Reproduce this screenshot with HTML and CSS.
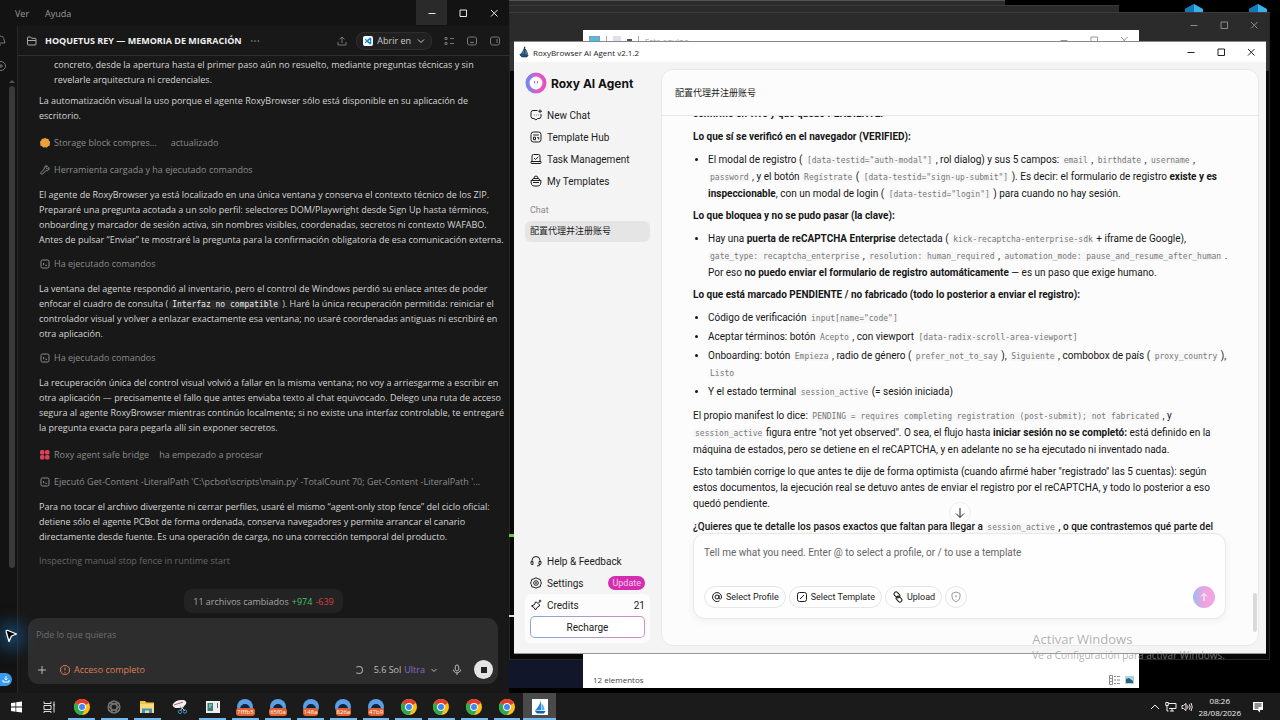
FILE: index.html
```html
<!DOCTYPE html>
<html lang="es">
<head>
  <meta charset="UTF-8">
  <title>Escritorio</title>
  <link rel="stylesheet" href="styles.css">
</head>
<body>

  <!-- Shared icons -->
  <svg class="sprite" aria-hidden="true">
    <symbol id="i-min" viewBox="0 0 12 12"><path d="M2.500 6.500h7"/></symbol>
    <symbol id="i-max" viewBox="0 0 12 12"><path d="M3 3h6.500v6.500H3z"/></symbol>
    <symbol id="i-close" viewBox="0 0 12 12"><path d="M3 3l6.500 6.500M9.500 3L3 9.500"/></symbol>
    <symbol id="i-terminal" viewBox="0 0 12 12"><rect x="2" y="2" width="8" height="8" rx="1.500"/><path d="M4 5l1.200 1.100L4 7.200M6.300 7.300H8"/></symbol>
    <symbol id="i-chrome" viewBox="0 0 16 16">
      <circle cx="8" cy="8" r="8" fill="#fbc116"/>
      <path d="M8 8L1.100 4A8 8 0 0 1 14.900 4z" fill="#e33b2e"/>
      <path d="M8 8L1.100 4A8 8 0 0 0 8 16l3.500-6z" fill="#2da94f"/>
      <circle cx="8" cy="8" r="3.900" fill="#fff"/><circle cx="8" cy="8" r="3" fill="#4285f4"/>
    </symbol>
    <symbol id="i-profile" viewBox="0 0 16 16">
      <circle cx="8" cy="8" r="8" fill="#5b9fe6"/>
      <path d="M3 10a5 5 0 0 1 10 0z" fill="#10233c"/>
    </symbol>
    <symbol id="i-sail" viewBox="0 0 16 16">
      <path d="M9 1v10H3.500C6 8.500 8 5 9 1z" fill="#2488d8"/>
      <path d="M9.500 4c2 2 3 5 3 7h-3z" fill="#58b4ee"/>
      <path d="M2.500 11.500L13.500 12l-1.500 2.500H5z" fill="#1263b3"/>
    </symbol>
    <symbol id="i-crystal" viewBox="0 0 20 8"><path d="M10 0l9 5v3H1V5z" fill="#35b3ee"/><path d="M10 0v8H1V5z" fill="#1579b4"/></symbol>
  </svg>

  <div class="desktop">

    <!-- Windows behind -->
    <div class="back back-one"></div>
    <div class="back back-two"></div>
    <svg class="crystal crystal-a"><use href="#i-crystal"/></svg>
    <svg class="crystal crystal-b"><use href="#i-crystal"/></svg>
    <div class="back back-three">
      <div class="controls">
        <button aria-label="Minimizar"><svg class="icon"><use href="#i-min"/></svg></button>
        <button aria-label="Maximizar"><svg class="icon"><use href="#i-max"/></svg></button>
        <button aria-label="Cerrar"><svg class="icon"><use href="#i-close"/></svg></button>
      </div>
    </div>
    <div class="navy"></div>
    <div class="edge"></div>
    <div class="edge edge-white"></div>

    <section class="explorer">
      <div class="explorer-title">
        <span class="pc"></span><span class="bar"></span><span class="doc"></span><span class="tick"></span><span class="bar"></span>
        <span class="explorer-name">Este equipo</span>
        <div class="controls">
          <button aria-label="Minimizar"><svg class="icon"><use href="#i-min"/></svg></button>
          <button aria-label="Maximizar"><svg class="icon"><use href="#i-max"/></svg></button>
          <button aria-label="Cerrar"><svg class="icon"><use href="#i-close"/></svg></button>
        </div>
      </div>
      <div class="explorer-status">
        <span>12 elementos</span>
        <svg class="views" viewBox="0 0 26 10"><g fill="none" stroke="#8a8a8a"><path d="M.5.500h3v9h-3zM.5 3.500h3M.5 6.500h3M5 1.500h2M8 1.500h3M5 5h2M8 5h3M5 8.500h2M8 8.500h3"/></g><path d="M16 1h9v8h-9z" fill="#a8d5e8"/><path d="M17 4l3-1 4 3v2h-7z" fill="#2b6272"/></svg>
      </div>
    </section>

    <!-- Dark chat window -->
    <section class="dark-win">
      <div class="menubar">
        <button>Ver</button><button>Ayuda</button>
        <div class="controls">
          <button class="hot" aria-label="Minimizar"><svg class="icon"><use href="#i-min"/></svg></button>
          <button aria-label="Maximizar"><svg class="icon"><use href="#i-max"/></svg></button>
          <button aria-label="Cerrar"><svg class="icon"><use href="#i-close"/></svg></button>
        </div>
      </div>
      <div class="dark-body">
        <aside class="rail">
          <svg class="rail-icon bell" viewBox="0 0 8 12"><path d="M0 2c3 0 4 2 4 4l1 3H0M0 11h1"/></svg>
          <svg class="rail-icon" viewBox="0 0 8 12"><circle cx="1" cy="6" r="4.500"/><path d="M0 6h3M1 4v4"/></svg>
          <span class="rail-arrow"></span>
          <span class="rail-thumb"></span>
          <span class="rail-download"><svg viewBox="0 0 12 12"><path d="M6 3v4M4.500 5.500L6 7l1.500-1.500M3 7v2h6V7"/></svg></span>
        </aside>

        <div class="thread">
          <header class="thread-head">
            <svg class="icon" viewBox="0 0 12 12"><path d="M1.500 9V3q0-1 1-1h2l1.200 1.300H9q1 0 1 1V9q0 1-1 1H2.500q-1 0-1-1zM1.500 5.500H10"/></svg>
            <h1>HOQUETUS REY — MEMORIA DE MIGRACIÓN</h1>
            <button class="more" aria-label="Más"><svg class="icon" viewBox="0 0 12 12"><path d="M2 6h1.500M5.300 6h1.500M8.600 6h1.500"/></svg></button>
            <div class="head-tools">
              <button aria-label="Compartir"><svg class="icon" viewBox="0 0 12 12"><path d="M6 8V2M3.500 4.200L6 2l2.500 2.200M2 7v3h8V7"/></svg></button>
              <button class="open-in">
                <svg class="code-logo" viewBox="0 0 10 10"><rect width="10" height="10" rx="2" fill="#fff"/><path d="M7 1.500L8.300 2v6L7 8.500 4 6 2.500 7.200 1.700 6.500 3.200 5 1.700 3.500l.8-.7L4 4zM7 3.700L5.200 5 7 6.300z" fill="#1789d0"/></svg>
                Abrir en
                <svg class="icon" viewBox="0 0 12 12"><path d="M3 4.500l3 3 3-3"/></svg>
              </button>
              <button aria-label="Lista"><svg class="icon" viewBox="0 0 12 12"><path d="M2 2.500h2v2H2zM2 7.500h2v2H2zM7 3.500h4M7 8.500h4"/></svg></button>
              <button aria-label="Panel inferior"><svg class="icon" viewBox="0 0 12 12"><rect x="1.500" y="2" width="9" height="8" rx="2"/><path d="M4 7.500h4"/></svg></button>
              <button aria-label="Panel lateral"><svg class="icon" viewBox="0 0 12 12"><rect x="1.500" y="2" width="9" height="8" rx="2"/><path d="M8 4v4"/></svg></button>
            </div>
          </header>

          <div class="messages">
            <p class="indent">concreto, desde la apertura hasta el primer paso aún no resuelto, mediante preguntas técnicas y sin<br>revelarle arquitectura ni credenciales.</p>
            <p class="tight">La automatización visual la uso porque el agente RoxyBrowser sólo está disponible en su aplicación de<br>escritorio.</p>
            <div class="tool wide"><svg class="icon" viewBox="0 0 12 12"><path d="M6 .8l1.500 1 1.800 0 .6 1.700L11.200 5l-.5 1.700.1 1.800-1.700.7-1.200 1.400L6 10.200l-1.800.4L3 9.200l-1.700-.7.1-1.800L.8 5l1.400-1.500.6-1.700 1.800 0z" fill="#e8a23c" stroke="none"/></svg><span>Storage block compres...</span><span class="state">actualizado</span></div>
            <div class="tool wide"><svg class="icon" viewBox="0 0 12 12"><path d="M10 3.500L8.300 5 7 3.700 8.500 2C6.500 1.300 4.700 3 5.300 5L2 8.500q-.6 1 .2 1.500.8.600 1.500-.2L7 6.700c2 .5 3.600-1.200 3-3.200z"/></svg><span>Herramienta cargada y ha ejecutado comandos</span></div>
            <p>El agente de RoxyBrowser ya está localizado en una única ventana y conserva el contexto técnico de los ZIP.<br>Prepararé una pregunta acotada a un solo perfil: selectores DOM/Playwright desde Sign Up hasta términos,<br>onboarding y marcador de sesión activa, sin nombres visibles, coordenadas, secretos ni contexto WAFABO.<br>Antes de pulsar “Enviar” te mostraré la pregunta para la confirmación obligatoria de esa comunicación externa.</p>
            <div class="tool"><svg class="icon"><use href="#i-terminal"/></svg><span>Ha ejecutado comandos</span></div>
            <p>La ventana del agente respondió al inventario, pero el control de Windows perdió su enlace antes de poder<br>enfocar el cuadro de consulta (<code>Interfaz no compatible</code>). Haré la única recuperación permitida: reiniciar el<br>controlador visual y volver a enlazar exactamente esa ventana; no usaré coordenadas antiguas ni escribiré en<br>otra aplicación.</p>
            <div class="tool"><svg class="icon"><use href="#i-terminal"/></svg><span>Ha ejecutado comandos</span></div>
            <p>La recuperación única del control visual volvió a fallar en la misma ventana; no voy a arriesgarme a escribir en<br>otra aplicación — precisamente el fallo que antes enviaba texto al chat equivocado. Delego una ruta de acceso<br>segura al agente RoxyBrowser mientras continúo localmente; si no existe una interfaz controlable, te entregaré<br>la pregunta exacta para pegarla allí sin exponer secretos.</p>
            <div class="tool wide"><svg class="icon" viewBox="0 0 12 12"><g fill="#d9435a" stroke="none"><rect x="1" y="1" width="4.500" height="4.500" rx="1.500"/><rect x="6" y="1" width="4.500" height="4.500" rx="1.500"/><rect x="1" y="6" width="4.500" height="4.500" rx="1.500"/><rect x="6" y="6" width="4.500" height="4.500" rx="1.500"/></g></svg><span>Roxy agent safe bridge</span><span class="state near">ha empezado a procesar</span></div>
            <div class="tool wide"><svg class="icon"><use href="#i-terminal"/></svg><span>Ejecutó Get-Content -LiteralPath 'C:\pcbot\scripts\main.py' -TotalCount 70; Get-Content -LiteralPath '...</span></div>
            <p>Para no tocar el archivo divergente ni cerrar perfiles, usaré el mismo “agent-only stop fence” del ciclo oficial:<br>detiene sólo el agente PCBot de forma ordenada, conserva navegadores y permite arrancar el canario<br>directamente desde fuente. Es una operación de carga, no una corrección temporal del producto.</p>
            <div class="tool working">Inspecting manual stop fence in runtime start</div>
          </div>

          <button class="changes">11 archivos cambiados <span class="plus">+974</span> <span class="minus">-639</span></button>

          <form class="ask">
            <input type="text" aria-label="Mensaje" placeholder="Pide lo que quieras">
            <div class="ask-row">
              <button type="button" aria-label="Añadir"><svg class="icon" viewBox="0 0 12 12"><path d="M6 2v8M2 6h8"/></svg></button>
              <button type="button" class="access"><svg class="icon" viewBox="0 0 12 12"><path d="M4 1.700h4L10.300 4v4L8 10.300H4L1.700 8V4zM6 3.500v3M6 8v.8"/></svg>Acceso completo</button>
              <span class="spinner"></span>
              <button type="button" class="model">5.6 Sol <span class="ultra">Ultra</span><svg class="icon" viewBox="0 0 12 12"><path d="M3.500 5L6 7.500 8.500 5"/></svg></button>
              <button type="button" aria-label="Dictar"><svg class="icon" viewBox="0 0 12 12"><rect x="4.300" y="1" width="3.400" height="6" rx="1.700"/><path d="M2.500 5.500c0 4.500 7 4.500 7 0M6 9v2"/></svg></button>
              <button type="button" class="stop" aria-label="Detener"></button>
            </div>
          </form>
        </div>
      </div>
    </section>

    <!-- RoxyBrowser window -->
    <section class="roxy">
      <div class="roxy-title">
        <svg class="icon sail"><use href="#i-sail"/></svg>
        <span>RoxyBrowser AI Agent v2.1.2</span>
        <div class="controls">
          <button aria-label="Minimizar"><svg class="icon"><use href="#i-min"/></svg></button>
          <button aria-label="Maximizar"><svg class="icon"><use href="#i-max"/></svg></button>
          <button aria-label="Cerrar"><svg class="icon"><use href="#i-close"/></svg></button>
        </div>
      </div>

      <div class="roxy-body">
        <aside class="side">
          <div class="brand">
            <svg viewBox="0 0 22 22"><defs><linearGradient id="ring"><stop offset="0" stop-color="#7388ee"/><stop offset=".6" stop-color="#e35bc4"/><stop offset="1" stop-color="#e94fc0"/></linearGradient></defs><circle cx="11" cy="11" r="8.500" fill="#fff" stroke="url(#ring)" stroke-width="4"/><path d="M9.500 9v2.500M12.500 9v2.500" stroke="#cf66d0"/></svg>
            Roxy AI Agent
          </div>
          <nav>
            <a href="#"><svg class="icon" viewBox="0 0 12 12"><path d="M7.500 1.500H3q-2 0-2 2v4q0 2 2 2h1l2 1.500 1.500-1.500H9q2 0 2-2V5M4 6h.5M6 6h.5M8 6h.5M10 .5v3.500M8.300 2.200H12"/></svg>New Chat</a>
            <a href="#"><svg class="icon" viewBox="0 0 12 12"><rect x="1" y="1" width="10" height="10" rx="2.500"/><path d="M3.300 4h5.500M3.500 6.200h2v2.500h-2zM7.200 6.500h1.500v2"/></svg>Template Hub</a>
            <a href="#"><svg class="icon" viewBox="0 0 12 12"><path d="M2 8.500V3q0-1.500 1.500-1.500h5Q10 1.500 10 3v5.500M1 8.500h10v1.200q0 .8-.8.800H1.800Q1 10.500 1 9.700zM4 5l1.500 1.500L8.300 3.800"/></svg>Task Management</a>
            <a href="#"><svg class="icon" viewBox="0 0 12 12"><path d="M1 5.500h10q0 5.500-3 5.500H4q-3 0-3-5.500zM2 5.500q.3-2 2-2h4q1.700 0 2 2M4 3.300q0-2.300 2-2.300t2 2.300M3 7.500h6"/></svg>My Templates</a>
          </nav>
          <h2>Chat</h2>
          <a class="chat-item" href="#">配置代理并注册账号</a>

          <div class="side-foot">
            <a href="#"><svg class="icon" viewBox="0 0 12 12"><path d="M2 7V5.500a4 4 0 0 1 8 0V7M1 6.500h2v3H2q-1 0-1-1zM9 6.500h2v2q0 1-1 1H9zM10 9.500q0 1.500-3 1.500"/></svg>Help &amp; Feedback</a>
            <a href="#"><svg class="icon" viewBox="0 0 12 12"><path d="M6 .8l2 1 2.200.6.500 2L11.400 6l-.7 1.700-.5 2-2.200.5-2 1-2-1-2.200-.5-.5-2L.6 6l.7-1.600.5-2L4 1.800z"/><circle cx="6" cy="6" r="2.300"/><circle cx="6" cy="6" r=".5"/></svg>Settings<span class="badge">Update</span></a>
            <div class="credits">
              <div class="credit-row"><svg class="icon" viewBox="0 0 12 12"><path d="M7.500 3.500L5.500 3 4.500 5.500 1.500 7l2.500 1.500 1.500 2.500L7 8.500 9.500 7 9 5M7.500 5l2-2M10 .8v2.500M8.800 2h2.500"/></svg>Credits<span class="amount">21</span></div>
              <button class="recharge">Recharge</button>
            </div>
          </div>
        </aside>

        <main class="panel">
          <header class="panel-head">配置代理并注册账号</header>

          <div class="answer">
            <h3 class="cut">confirmo en vivo y qué quedó PENDIENTE:</h3>
            <h3>Lo que sí se verificó en el navegador (VERIFIED):</h3>
            <ul>
              <li>El modal de registro ( <code>[data-testid="auth-modal"]</code> , rol dialog) y sus 5 campos: <code>email</code> , <code>birthdate</code> , <code>username</code> ,<br><code>password</code> , y el botón <code>Regístrate</code> ( <code>[data-testid="sign-up-submit"]</code> ). Es decir: el formulario de registro <b>existe y es</b><br><b>inspeccionable</b>, con un modal de login ( <code>[data-testid="login"]</code> ) para cuando no hay sesión.</li>
            </ul>
            <h3>Lo que bloquea y no se pudo pasar (la clave):</h3>
            <ul>
              <li>Hay una <b>puerta de reCAPTCHA Enterprise</b> detectada ( <code>kick-recaptcha-enterprise-sdk</code> + iframe de Google),<br><code>gate_type: recaptcha_enterprise</code> , <code>resolution: human_required</code> , <code>automation_mode: pause_and_resume_after_human</code> .<br>Por eso <b>no puedo enviar el formulario de registro automáticamente</b> — es un paso que exige humano.</li>
            </ul>
            <h3>Lo que está marcado PENDIENTE / no fabricado (todo lo posterior a enviar el registro):</h3>
            <ul>
              <li>Código de verificación <code>input[name="code"]</code></li>
              <li>Aceptar términos: botón <code>Acepto</code> , con viewport <code>[data-radix-scroll-area-viewport]</code></li>
              <li>Onboarding: botón <code>Empieza</code> , radio de género ( <code>prefer_not_to_say</code> ), <code>Siguiente</code> , combobox de país ( <code>proxy_country</code> ),<br><code>Listo</code></li>
              <li>Y el estado terminal <code>session_active</code> (= sesión iniciada)</li>
            </ul>
            <p class="with-code">El propio manifest lo dice: <code>PENDING = requires completing registration (post-submit); not fabricated</code> , y<br><code>session_active</code> figura entre "not yet observed". O sea, el flujo hasta <b>iniciar sesión no se completó:</b> está definido en la<br>máquina de estados, pero se detiene en el reCAPTCHA, y en adelante no se ha ejecutado ni inventado nada.</p>
            <p>Esto también corrige lo que antes te dije de forma optimista (cuando afirmé haber "registrado" las 5 cuentas): según<br>estos documentos, la ejecución real se detuvo antes de enviar el registro por el reCAPTCHA, y todo lo posterior a eso<br>quedó pendiente.</p>
            <p class="question">¿Quieres que te detalle los pasos exactos que faltan para llegar a <code>session_active</code> , o que contrastemos qué parte del</p>
          </div>

          <form class="prompt">
            <button type="button" class="to-bottom" aria-label="Bajar"><svg class="icon" viewBox="0 0 12 12"><path d="M6 1v9.500M2 6.500l4 4 4-4"/></svg></button>
            <input type="text" aria-label="Mensaje" placeholder="Tell me what you need. Enter @ to select a profile, or / to use a template">
            <div class="prompt-row">
              <button type="button" class="pill"><svg class="icon" viewBox="0 0 12 12"><circle cx="6" cy="6" r="2"/><path d="M8 4v3q0 1.200 1.300 1T10.500 6A4.500 4.500 0 1 0 8.500 9.800"/></svg>Select Profile</button>
              <button type="button" class="pill"><svg class="icon" viewBox="0 0 12 12"><rect x="1.500" y="1.500" width="9" height="9" rx="2"/><path d="M4 8l4-4"/></svg>Select Template</button>
              <button type="button" class="pill"><svg class="icon" viewBox="0 0 12 12"><g transform="rotate(45 6 6)"><rect x=".5" y="3.200" width="6.500" height="4" rx="2"/><rect x="5" y="4.800" width="6.500" height="4" rx="2"/></g></svg>Upload</button>
              <button type="button" class="pill shield" aria-label="Privacidad"><svg class="icon" viewBox="0 0 12 12"><path d="M6 1l4 1.500V6q0 3.200-4 5-4-1.800-4-5V2.500zM6 4v2.500M6 8v.5"/></svg></button>
              <button type="button" class="send" aria-label="Enviar"><svg class="icon" viewBox="0 0 12 12"><path d="M6 10V3M3 5.500L6 2.500l3 3"/></svg></button>
            </div>
          </form>
          <span class="panel-thumb"></span>
        </main>
      </div>
    </section>

    <svg class="cursor" viewBox="0 0 14 16"><path d="M1.500 1.500l11 4.500-5 2-2.500 5.500z" fill="#000" stroke="#fff" stroke-width="1.300" stroke-linejoin="round"/></svg>
    <div class="watermark"><strong>Activar Windows</strong><span>Ve a Configuración para activar Windows.</span></div>
  </div>

  <footer class="taskbar">
    <div class="apps">
      <button aria-label="Inicio"><svg viewBox="0 0 16 16"><path d="M3 4l4.500-.6v4.200H3zM8.200 3.300L14 2.500v5.100H8.200zM3 8.400h4.500v4.300L3 12zM8.200 8.400H14v5.100l-5.800-.8z" fill="#fff"/></svg></button>
      <button aria-label="Vista de tareas"><svg viewBox="0 0 16 16"><path d="M3 2.500v2h7v-2M3 6.500h7v4H3zM3 14v-1.500h7V14M13 2.500v11M12 6h2" fill="none" stroke="#ddd"/></svg></button>
      <button class="open" aria-label="Chrome"><svg viewBox="0 0 16 16"><use href="#i-chrome"/></svg></button>
      <button class="open" aria-label="Codex"><svg viewBox="0 0 16 16"><g fill="none" stroke="#777" stroke-width="1.200"><circle cx="8" cy="8" r="6"/><ellipse cx="8" cy="8" rx="6" ry="3" transform="rotate(30 8 8)"/><ellipse cx="8" cy="8" rx="6" ry="3" transform="rotate(90 8 8)"/><ellipse cx="8" cy="8" rx="6" ry="3" transform="rotate(150 8 8)"/></g></svg></button>
      <button class="open" aria-label="Explorador"><svg viewBox="0 0 16 16"><path d="M1 2h5l1.500 1.500H15V14H1z" fill="#f3c444"/><path d="M1 5h14v9H1z" fill="#fbdb73"/><path d="M3 14V9.500h10V14h-3v-2.500H6V14z" fill="#3c91d1"/></svg></button>
      <button aria-label="Recortes"><svg viewBox="0 0 16 16"><ellipse cx="7.500" cy="5" rx="7" ry="3.800" fill="#eee" transform="rotate(-15 7.500 5)"/><path d="M2 6l9-3" stroke="#c4555e"/><path d="M7 6l6 6M12 7l-4 5" stroke="#ccc"/><circle cx="13" cy="12.500" r="1.700" fill="none" stroke="#3f8fc5"/><circle cx="8" cy="12.800" r="1.700" fill="none" stroke="#3f8fc5"/></svg></button>
      <button class="open" aria-label="PCBot"><svg viewBox="0 0 16 16"><path d="M1 2h14v12H1z" fill="#eee"/><path d="M2.500 4H8v8H2.500z" fill="#397e73"/><path d="M4 6h3M4 8h2" stroke="#bde"/><path d="M12.500 4v5" stroke="#666"/></svg></button>
      <button class="open profile"><svg viewBox="0 0 16 16"><use href="#i-profile"/></svg><span>7fffb5</span></button>
      <button class="open profile"><svg viewBox="0 0 16 16"><use href="#i-profile"/></svg><span>65f0a</span></button>
      <button class="open profile"><svg viewBox="0 0 16 16"><use href="#i-profile"/></svg><span>148a</span></button>
      <button class="open profile"><svg viewBox="0 0 16 16"><use href="#i-profile"/></svg><span>826a</span></button>
      <button class="open profile"><svg viewBox="0 0 16 16"><use href="#i-profile"/></svg><span>47b9</span></button>
      <button class="open" aria-label="Chrome"><svg viewBox="0 0 16 16"><use href="#i-chrome"/></svg></button>
      <button class="open" aria-label="Chrome"><svg viewBox="0 0 16 16"><use href="#i-chrome"/></svg></button>
      <button class="open" aria-label="Chrome"><svg viewBox="0 0 16 16"><use href="#i-chrome"/></svg></button>
      <button class="open" aria-label="Chrome"><svg viewBox="0 0 16 16"><use href="#i-chrome"/></svg></button>
      <button class="open current" aria-label="RoxyBrowser"><svg class="boat" viewBox="0 0 16 16"><use href="#i-sail"/></svg></button>
    </div>
    <div class="tray">
      <svg class="icon" viewBox="0 0 12 12"><path d="M2 8l4-4 4 4"/></svg>
      <svg class="icon" viewBox="0 0 12 12"><path d="M3.500 2.500H11v5H4M7 7.500V10M5 10h4M.8 1.500h2.500v3H.8zM2 4.500V10h1.500"/></svg>
      <svg class="icon" viewBox="0 0 12 12"><path d="M1 4.500h1.500L5 2.500v7L2.500 7.500H1zM6.500 4.500q1 1.500 0 3M8.300 3.300q1.800 2.700 0 5.400M10 2q2.500 4 0 8"/></svg>
      <time>08:26<br>28/08/2026</time>
      <svg class="icon note" viewBox="0 0 12 12"><path d="M1 1h10v8H8v2.500L5.500 9H1z" fill="#fff" stroke="none"/><path d="M2.500 3h7M2.500 5h7M2.500 7h4" stroke="#222"/></svg>
    </div>
  </footer>

</body>
</html>
```
FILE: styles.css
```css
* {
  box-sizing: border-box;
}

body {
  margin: 0;
  height: 100vh;
  display: flex;
  flex-direction: column;
  overflow: hidden;
  background: #000;
  font-family: "Open Sans", "Noto Sans", sans-serif;
  font-size: 9px;
}

button {
  display: flex;
  align-items: center;
  justify-content: center;
  padding: 0;
  border: none;
  background: none;
  color: inherit;
  font: inherit;
  cursor: pointer;
}

input {
  border: none;
  outline: none;
  padding: 0;
  background: none;
  font: inherit;
}

a {
  color: inherit;
  text-decoration: none;
}

h1, h2, h3, p, ul {
  margin: 0;
}

.sprite {
  position: absolute;
  width: 0;
  height: 0;
}

.icon {
  flex: none;
  width: 12px;
  height: 12px;
  fill: none;
  stroke: currentColor;
}

.desktop {
  position: relative;
  flex: 1;
  min-height: 0;
}

.controls {
  display: flex;
  margin-left: auto;
}

.controls button {
  width: 30px;
  height: 20px;
}

/* Background windows */
.back {
  position: absolute;
  background: #2b2b2b;
}

.back-one {
  inset: 0 275px auto 509px;
  height: 6px;
  border-top: 1px solid #555;
}

.back-two {
  inset: 5px 161px auto 509px;
  height: 8px;
  border-top: 1px solid #3a3a3a;
}

.back-three {
  inset: 12px 10px 33px 509px;
  background: linear-gradient(#2b2b2b 28px, #333 28px, #333 58px, #080808 58px);
  border: 1px solid #262626;
  border-top-color: #3c3c3c;
  color: #8a8a8a;
}

.back-three .controls {
  justify-content: flex-end;
  padding-top: 2px;
}

.crystal {
  position: absolute;
  top: 4px;
  width: 20px;
  height: 8px;
}

.crystal-a {
  right: 76px;
}

.crystal-b {
  right: 12px;
}

.navy {
  position: absolute;
  inset: auto auto 5px 509px;
  width: 74px;
  height: 28px;
  background: #12162a;
}

.edge {
  position: absolute;
  left: 509px;
  top: 534px;
  width: 5px;
  height: 3px;
  background: #6ac93f;
}

.edge-white {
  top: 615px;
  height: 2px;
  background: #ddd;
}

.explorer {
  position: absolute;
  inset: 30px 141px 5px 583px;
  display: flex;
  flex-direction: column;
  justify-content: space-between;
  background: #fff;
  color: #444;
}

.explorer-title {
  display: flex;
  align-items: center;
  gap: 6px;
  height: 20px;
  padding-left: 6px;
  color: #999;
}

.pc {
  width: 11px;
  height: 9px;
  background: #4fbce8;
  border: 1px solid #8a9ba5;
}

.doc {
  width: 8px;
  height: 9px;
  background: #dfe1ea;
}

.bar {
  width: 1px;
  height: 9px;
  background: #aaa;
}

.tick {
  width: 5px;
  height: 2px;
  background: #555;
}

.explorer-name {
  font-size: 8px;
}

.explorer-status {
  display: flex;
  align-items: center;
  justify-content: space-between;
  height: 17px;
  padding: 0 4px 0 10px;
  font-size: 8px;
}

.views {
  width: 26px;
  height: 10px;
}

/* Dark chat window */
.dark-win {
  position: absolute;
  inset: 0 auto 0 0;
  width: 509px;
  display: flex;
  flex-direction: column;
  background: #181818;
  color: #d6d6d6;
}

.menubar {
  display: flex;
  flex: none;
  height: 26px;
  gap: 16px;
  padding-left: 15px;
  background: #131313;
  color: #9a9a9a;
}

.menubar .controls button {
  height: 25px;
  width: 31px;
  color: #e8e8e8;
}

.menubar .controls .hot {
  background: #2a2a2a;
}

.dark-body {
  display: flex;
  flex: 1;
  min-height: 0;
}

.rail {
  display: flex;
  flex-direction: column;
  flex: none;
  width: 18px;
  padding-top: 8px;
  background: #131313;
  border-right: 1px solid #292929;
}

.rail-icon {
  width: 8px;
  height: 12px;
  fill: none;
  stroke: #777;
}

.rail-icon.bell {
  margin-bottom: 14px;
}

.rail-arrow {
  align-self: flex-end;
  margin: 8px 2px 3px 0;
  border: 3px solid transparent;
  border-top: none;
  border-bottom-color: #555;
}

.rail-thumb {
  flex: 1;
  align-self: flex-end;
  width: 6px;
  margin-right: 2px;
  border-radius: 3px;
  background: #393939;
}

.rail-download {
  width: 12px;
  height: 13px;
  margin: 105px 0 7px;
  border-radius: 0 7px 7px 0;
  background: #3a9cf0;
  stroke: #fff;
  fill: none;
}

.rail-download svg {
  display: block;
}

.thread {
  display: flex;
  flex-direction: column;
  flex: 1;
  min-width: 0;
  padding-bottom: 9px;
}

.thread-head {
  display: flex;
  align-items: center;
  gap: 7px;
  flex: none;
  height: 30px;
  padding: 0 8px;
  border-bottom: 1px solid #303030;
  color: #aaa;
}

.thread-head h1 {
  font-size: 9px;
  font-weight: 700;
  color: #f0f0f0;
}

.head-tools {
  display: flex;
  align-items: center;
  gap: 11px;
  margin-left: auto;
  color: #777;
}

.head-tools .open-in {
  gap: 4px;
  height: 18px;
  margin-left: -3px;
  padding: 0 4px 0 6px;
  border: 1px solid #2e2e2e;
  border-radius: 8px;
  background: #202020;
  color: #ccc;
}

.code-logo {
  width: 10px;
  height: 10px;
}

.messages {
  flex: 1;
  min-height: 0;
  overflow: hidden;
  padding: 1px 8px 0 21px;
  line-height: 15px;
  white-space: nowrap;
}

.messages p {
  margin-top: 10px;
}

.messages .indent {
  margin-top: 0;
  padding-left: 15px;
}

.messages .tight {
  margin-top: 6px;
}

.messages code {
  margin: 0 1px;
  padding: 0 3px;
  border-radius: 4px;
  background: #2a2a2a;
  color: #eee;
  font-family: "DejaVu Sans Mono", monospace;
  font-size: 8px;
  line-height: 10px;
}

.tool {
  display: flex;
  align-items: center;
  gap: 3px;
  height: 15px;
  margin-top: 9px;
  color: #8c8c8c;
}

.tool.wide {
  margin-top: 12px;
}

.tool .state {
  margin-left: 11px;
}

.tool .near {
  margin-left: 7px;
}

.working {
  color: #666;
}

.changes {
  align-self: center;
  gap: 3px;
  height: 24px;
  margin-bottom: 5px;
  padding: 0 9px;
  border-radius: 8px;
  background: #232323;
  color: #a5a5a5;
}

.plus {
  color: #43c463;
}

.minus {
  color: #d8403f;
}

.ask {
  display: flex;
  flex-direction: column;
  justify-content: space-between;
  height: 66px;
  margin: 0 11px 0 10px;
  padding: 8px 5px 5px 8px;
  border-radius: 11px;
  background: #2d2d2d;
}

.ask input {
  height: 16px;
  color: #ddd;
}

.ask input::placeholder {
  color: #6e6e6e;
}

.ask-row {
  display: flex;
  align-items: center;
  gap: 11px;
  color: #bbb;
}

.access {
  gap: 3px;
  color: #dd7f55;
}

.spinner {
  width: 8px;
  height: 8px;
  margin-left: auto;
  border: 1px solid #aaa;
  border-left-color: transparent;
  border-radius: 50%;
}

.model {
  gap: 3px;
}

.ultra {
  color: #9066cc;
}

.stop {
  width: 19px;
  height: 19px;
  border-radius: 50%;
  background: #e4e4e4;
}

.stop::after {
  content: "";
  width: 6px;
  height: 6px;
  background: #222;
}

.cursor {
  position: absolute;
  left: 4px;
  top: 628px;
  width: 14px;
  height: 16px;
  border-radius: 50%;
  box-shadow: 0 0 14px 8px rgba(25, 100, 160, 0.45);
  background: rgba(25, 100, 160, 0.45);
}

/* RoxyBrowser window */
.roxy {
  position: absolute;
  inset: 41px 14px 39px 514px;
  display: flex;
  flex-direction: column;
  border-top: 1px solid #888;
  border-bottom: 1px solid #999;
  background: #f4f4f4;
  color: #1c1c1c;
  font-family: Roboto, "Noto Sans CJK SC", sans-serif;
}

.roxy-title {
  display: flex;
  align-items: center;
  flex: none;
  gap: 3px;
  height: 20px;
  padding-left: 4px;
  background: #fff;
  color: #222;
  font-family: "Open Sans", sans-serif;
  font-size: 8px;
}

.roxy-body {
  display: flex;
  flex: 1;
  min-height: 0;
  padding: 7px 7px 7px 11px;
}

.side {
  display: flex;
  flex-direction: column;
  flex: none;
  width: 125px;
  font-size: 10px;
}

.brand {
  display: flex;
  align-items: center;
  gap: 4px;
  height: 28px;
  color: #111;
  font-family: Inter, sans-serif;
  font-size: 12px;
  font-weight: 700;
}

.brand svg {
  width: 22px;
  height: 22px;
}

.side nav {
  padding-top: 7px;
}

.side nav a, .side-foot a, .credit-row {
  display: flex;
  align-items: center;
  gap: 5px;
  height: 22px;
  padding: 0 5px;
}

.side h2 {
  padding: 13px 5px 5px;
  color: #888;
  font-size: 9px;
  line-height: 11px;
  font-weight: 400;
}

.chat-item {
  height: 21px;
  padding: 0 5px;
  border-radius: 6px;
  background: #e5e5e5;
  font-size: 9px;
  line-height: 21px;
}

.side-foot {
  margin-top: auto;
}

.badge {
  margin-left: auto;
  padding: 0 4px;
  border-radius: 7px;
  background: #d52db0;
  color: #f6c8ec;
  font-size: 9px;
  line-height: 14px;
}

.credits {
  margin-bottom: 3px;
  padding-bottom: 5px;
  border-radius: 6px;
  background: #fcfcfc;
}

.amount {
  margin-left: auto;
}

.recharge {
  width: 115px;
  height: 22px;
  margin-left: 5px;
  border: 1px solid transparent;
  border-radius: 5px;
  background: linear-gradient(#fff, #fff) padding-box, linear-gradient(90deg, #84a8e0, #d98abf) border-box;
}

.panel {
  position: relative;
  display: flex;
  flex-direction: column;
  flex: 1;
  min-width: 0;
  margin-left: 11px;
  border: 1px solid #e8e8e8;
  border-radius: 12px;
  background: #fcfcfc;
}

.panel-head {
  flex: none;
  height: 46px;
  padding-left: 13px;
  border-bottom: 1px solid #e8e8e8;
  font-size: 9px;
  line-height: 46px;
}

.answer {
  flex: 1;
  min-height: 0;
  overflow: hidden;
  padding-left: 31px;
  color: #161616;
  font-size: 10px;
  line-height: 16px;
  white-space: nowrap;
}

.answer h3 {
  margin-top: 6px;
  font-size: 10px;
  font-weight: 700;
}

.answer .cut {
  margin-top: -10px;
  margin-bottom: 7px;
}

.answer ul {
  margin-top: 6px;
  padding-left: 15px;
  line-height: 17px;
}

.answer li + li {
  margin-top: 2px;
}

.answer p {
  margin-top: 6px;
}

.answer .with-code {
  margin-top: 7px;
  line-height: 17px;
}

.answer .question {
  margin-top: 7px;
  font-weight: 500;
}

.answer code {
  padding: 0 1px 0 2px;
  border-radius: 3px;
  background: #f7f7f7;
  color: #777;
  font-family: "DejaVu Sans Mono", monospace;
  font-size: 8px;
  line-height: 10px;
}

.prompt {
  position: relative;
  display: flex;
  flex-direction: column;
  justify-content: space-between;
  flex: none;
  height: 86px;
  margin: 0 32px 26px 31px;
  padding: 10px;
  border: 1px solid #e8e8e8;
  border-radius: 12px;
  background: #fefefe;
  box-shadow: 0 2px 8px rgba(0, 0, 0, 0.05);
}

.prompt input {
  height: 17px;
  font-size: 10px;
}

.prompt input::placeholder {
  color: #666;
}

.to-bottom {
  position: absolute;
  left: 50%;
  top: -32px;
  width: 22px;
  height: 22px;
  margin-left: -11px;
  border: 1px solid #eee;
  border-radius: 50%;
  background: #fff;
}

.prompt-row {
  display: flex;
  gap: 3px;
}

.pill {
  gap: 3px;
  height: 22px;
  padding: 0 6px;
  border: 1px solid #e6e6e6;
  border-radius: 11px;
}

.shield {
  width: 22px;
  padding: 0;
  color: #999;
}

.send {
  width: 22px;
  height: 22px;
  margin-left: auto;
  border-radius: 50%;
  background: linear-gradient(90deg, #9dbcf0, #efa3df 50%, #f3a4e0);
  color: #fff;
}

.panel-thumb {
  position: absolute;
  right: 1px;
  bottom: 13px;
  width: 4px;
  height: 39px;
  border-radius: 2px;
  background: #d9d9d9;
}

.watermark {
  position: absolute;
  right: 55px;
  bottom: 31px;
  display: flex;
  flex-direction: column;
  color: rgba(150, 150, 150, 0.75);
  font-size: 10px;
  line-height: 14px;
}

.watermark strong {
  font-size: 13px;
  font-weight: 400;
  line-height: 17px;
}

/* Taskbar */
.taskbar {
  display: flex;
  flex: none;
  justify-content: space-between;
  height: 27px;
  background: #1b1b1b;
  color: #eee;
}

.apps {
  display: flex;
  width: 556px;
}

.apps button {
  position: relative;
  flex: 1;
  min-width: 0;
}

.apps svg {
  width: 16px;
  height: 16px;
}

.apps .open::after {
  content: "";
  position: absolute;
  inset: auto 3px 0;
  height: 2px;
  background: #76b9ed;
}

.apps .current {
  background: #4a4a4a;
}

.apps .current::after {
  inset: auto 0 0;
}

.apps .boat {
  background: #fff;
}

.profile span {
  position: absolute;
  bottom: 4px;
  padding: 0 1px;
  border-radius: 3px;
  background: #e0612f;
  color: #fff;
  font-size: 6px;
  line-height: 8px;
}

.tray {
  display: flex;
  align-items: center;
  gap: 4px;
  padding-right: 16px;
}

.tray time {
  margin: 0 7px 0 2px;
  text-align: center;
  font-size: 8px;
  line-height: 12px;
}
```
